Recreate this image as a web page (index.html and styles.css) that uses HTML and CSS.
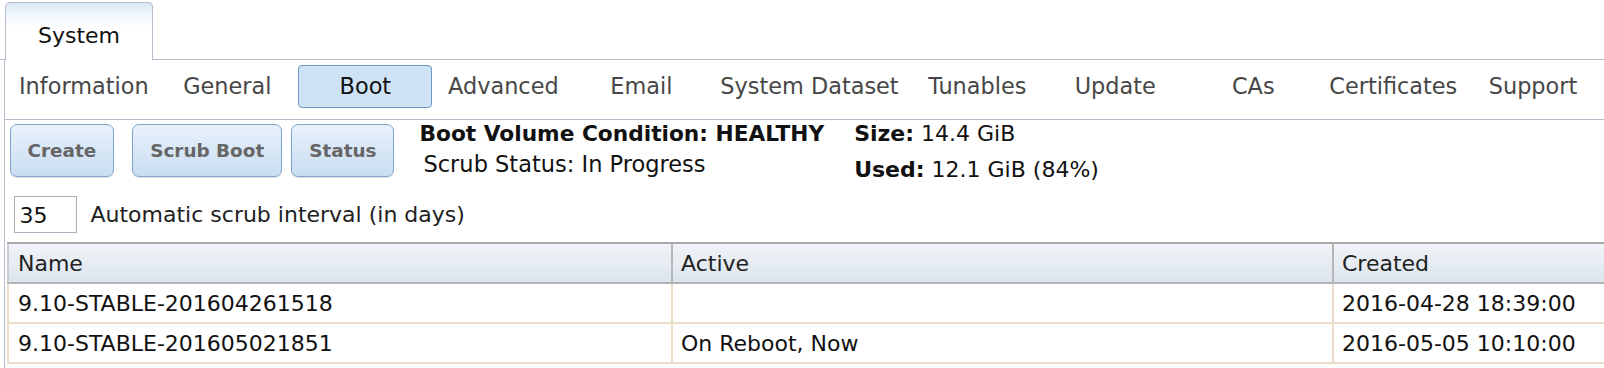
FILE: index.html
```html
<!DOCTYPE html>
<html>
<head>
<meta charset="utf-8">
<link rel="stylesheet" href="styles.css">
</head>
<body>
<div class="tabbar">
  <div class="tab">System</div>
</div>
<div class="panel">
  <div class="subnav">
    <div class="subnav-item">Information</div>
    <div class="subnav-item">General</div>
    <div class="subnav-item active">Boot</div>
    <div class="subnav-item">Advanced</div>
    <div class="subnav-item">Email</div>
    <div class="subnav-item">System Dataset</div>
    <div class="subnav-item">Tunables</div>
    <div class="subnav-item">Update</div>
    <div class="subnav-item">CAs</div>
    <div class="subnav-item narrow">Certificates</div>
    <div class="subnav-item">Support</div>
  </div>
  <div class="toolbar">
    <div class="buttons">
      <button class="btn">Create</button>
      <button class="btn btn-scrub">Scrub Boot</button>
      <button class="btn">Status</button>
    </div>
    <div class="info">
      <div class="info-line condition"><b>Boot Volume Condition: HEALTHY</b></div>
      <div class="info-line indent">Scrub Status: In Progress</div>
    </div>
    <div class="usage">
      <div class="info-line"><b>Size:</b> 14.4 GiB</div>
      <div class="info-line used"><b>Used:</b> 12.1 GiB (84%)</div>
    </div>
  </div>
  <div class="interval">
    <div class="input">35</div>
    <span class="interval-label">Automatic scrub interval (in days)</span>
  </div>
  <div class="grid-wrap">
    <table class="grid">
      <thead>
        <tr><th class="c-name">Name</th><th class="c-active">Active</th><th class="c-created">Created</th></tr>
      </thead>
      <tbody>
        <tr><td>9.10-STABLE-201604261518</td><td></td><td>2016-04-28 18:39:00</td></tr>
        <tr><td>9.10-STABLE-201605021851</td><td>On Reboot, Now</td><td>2016-05-05 10:10:00</td></tr>
      </tbody>
    </table>
  </div>
</div>
</body>
</html>
```

FILE: styles.css
```css
html, body {
  margin: 0;
  padding: 0;
  background: #fff;
  overflow: hidden;
}
body {
  font-family: "DejaVu Sans", Verdana, sans-serif;
  font-size: 22px;
  color: #111;
}
.tabbar {
  height: 59.5px;
  padding: 3px 0 0 5px;
  box-sizing: border-box;
  border-bottom: 1.5px solid #b6bdca;
  display: flex;
  align-items: flex-end;
}
.tab {
  width: 148px;
  height: 58px;
  box-sizing: border-box;
  border: 1.5px solid #b6bdca;
  border-bottom: none;
  border-radius: 5px 5px 0 0;
  background: linear-gradient(#dbe7f6 0%, #f7fafd 28%, #fff 45%);
  margin-bottom: -1.5px;
  text-align: center;
  padding-top: 20px;
  color: #111;
}
.panel {
  margin-left: 4px;
  border-left: 1.5px solid #b6bdca;
  height: 320px;
}
.subnav {
  height: 60px;
  box-sizing: border-box;
  border-bottom: 1.5px solid #b6bdca;
  display: flex;
  align-items: flex-start;
  padding: 5px 0 0 6px;
  font-size: 22.4px;
}
.subnav-item {
  min-width: 134px;
  height: 43px;
  box-sizing: border-box;
  padding: 0 7px;
  margin-right: 4px;
  line-height: 41px;
  text-align: center;
  color: #474747;
  border: 1px solid transparent;
  border-radius: 4px;
  white-space: nowrap;
}
.subnav-item.narrow {
  padding: 0 4px;
}
.subnav-item.active {
  background: #cfe3f7;
  border-color: #6f99c4;
  color: #111;
}
.toolbar {
  display: flex;
  align-items: flex-start;
}
.buttons {
  display: flex;
  margin: 4px 0 0 4.5px;
}
.btn {
  font-family: "DejaVu Sans", Verdana, sans-serif;
  font-size: 18.4px;
  font-weight: bold;
  color: #666;
  height: 53px;
  padding: 0 17px;
  border: 1px solid #7fa5cc;
  border-radius: 7px;
  background: linear-gradient(#e8f1fb, #c9ddf2);
  box-shadow: 0 1px 1px rgba(0, 0, 0, 0.12);
  margin-right: 9px;
}
.btn-scrub {
  margin-left: 9px;
}
.info {
  margin: -1.5px 0 0 16px;
}
.info-line {
  line-height: 31px;
  white-space: nowrap;
}
.condition {
  font-size: 21.7px;
}
.indent {
  padding-left: 4px;
  font-size: 22.5px;
}
.usage {
  margin: -1.5px 0 0 30px;
}
.used {
  margin-top: 5px;
}
.interval {
  display: flex;
  align-items: center;
  margin: 11px 0 0 8.5px;
}
.input {
  width: 63px;
  height: 37px;
  box-sizing: border-box;
  border: 1.5px solid #a9b1bf;
  padding: 4px 0 0 5px;
  line-height: 30px;
}
.interval-label {
  margin-left: 14px;
  color: #222;
}
.grid-wrap {
  margin: 9px 0 0 1.5px;
  overflow: hidden;
}
.grid {
  border-collapse: collapse;
  width: 1700px;
  table-layout: fixed;
}
.c-name { width: 664px; }
.c-active { width: 661px; }
.grid th {
  text-align: left;
  font-weight: normal;
  color: #222;
  height: 40px;
  padding: 0 0 0 8.5px;
  background: linear-gradient(#f1f4f8, #dce4ed);
  border-top: 2px solid #a9a9a9;
  border-bottom: 2px solid #b4b4b4;
  border-left: 2px solid #b7b7b7;
  box-sizing: border-box;
}
.grid th:first-child {
  border-left: 2px solid #c8ccd2;
  padding-left: 9.5px;
}
.grid td {
  height: 40px;
  padding: 0 0 0 8.5px;
  border-bottom: 2px solid #eedccb;
  border-left: 2px solid #eedccb;
  white-space: nowrap;
  box-sizing: border-box;
}
.grid td:first-child {
  padding-left: 9.5px;
}
```
